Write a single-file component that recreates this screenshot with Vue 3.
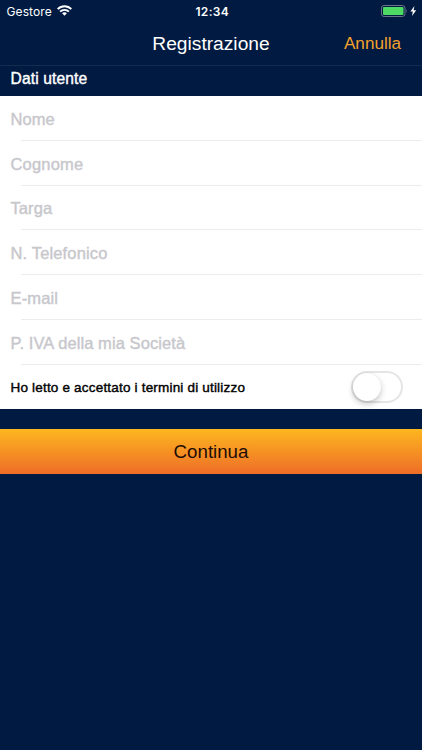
<script setup>
const fields = [
  { label: 'Nome', cls: 'nome' },
  { label: 'Cognome', cls: 'cognome' },
  { label: 'Targa', cls: 'targa' },
  { label: 'N. Telefonico', cls: 'telefono' },
  { label: 'E-mail', cls: 'email' },
  { label: 'P. IVA della mia Società', cls: 'iva' },
]
</script>

<template>
  <main class="screen">
    <header class="status">
      <div class="carrier">
        <span>Gestore</span>
        <svg class="wifi" width="15" height="11" viewBox="0 0 15 11" fill="none" stroke="#fff" stroke-width="1.9">
          <path d="M.7 4.2C4.5 .3 10.5 .3 14.3 4.2" />
          <path d="M3.1 6.7C5.5 4.3 9.5 4.3 11.9 6.7" />
          <path d="M7.5 10.7L5.1 8.3C6.4 7 8.6 7 9.9 8.3Z" fill="#fff" stroke="none" />
        </svg>
      </div>
      <span class="clock">12:34</span>
      <div class="power">
        <svg width="36" height="12" viewBox="0 0 36 12">
          <rect x=".5" y=".5" width="23.5" height="11" rx="2.6" fill="none" stroke="#69758d" />
          <rect x="2" y="2" width="20.5" height="8" rx="1" fill="#4cd964" />
          <path d="M25.3 4.1Q26.8 6 25.3 7.9Z" fill="#69758d" />
          <path d="M33.4 1L29.4 6.6H31.8L31 11L35.2 5.2H32.6Z" fill="#fff" />
        </svg>
      </div>
    </header>
    <nav class="nav">
      <span></span>
      <h1>Registrazione</h1>
      <a class="cancel">Annulla</a>
    </nav>
    <h2 class="section"><span>Dati utente</span></h2>
    <section class="form">
      <div v-for="f in fields" :key="f.cls" class="row">
        <span :class="['placeholder', f.cls]">{{ f.label }}</span>
      </div>
      <div class="row terms">
        <span class="terms-text">Ho letto e accettato i termini di utilizzo</span>
        <div class="switch"><div class="knob"></div></div>
      </div>
    </section>
    <button class="continue"><span>Continua</span></button>
  </main>
</template>

<style>
body { margin: 0; background: #001a41; }
</style>

<style scoped>
.screen {
  width: 422px;
  height: 750px;
  overflow: hidden;
  background: #001a41;
  color: #fff;
  font-family: "Liberation Sans", Arial, sans-serif;
}
.status {
  display: grid;
  grid-template-columns: 1fr auto 1fr;
  align-items: center;
  height: 22px;
  box-sizing: border-box;
  padding: 0 4px 0 6.5px;
  font-family: Inter, sans-serif;
  font-size: 12px;
}
.carrier { display: flex; align-items: center; gap: 5px; letter-spacing: .1px; }
.wifi { display: block; position: relative; top: -1px; }
.clock { font-weight: 600; font-size: 12px; letter-spacing: .3px; }
.power { display: flex; justify-content: flex-end; }
.power svg { display: block; margin-right: 1px; }
.nav {
  display: grid;
  grid-template-columns: 1fr auto 1fr;
  align-items: center;
  height: 43px;
  padding: 0 21px;
  border-bottom: 1px solid #142b50;
}
h1 { margin: 0; font-size: 19.2px; font-weight: 400; line-height: 22px; }
.cancel { justify-self: end; color: #f5a12c; font-size: 17.1px; line-height: 22px; }
.section {
  margin: 0;
  height: 30px;
  padding-left: 10.5px;
  box-sizing: border-box;
  font-size: 15.6px;
  letter-spacing: .13px;
  line-height: 26px;
  font-weight: 400;
  -webkit-text-stroke: .4px currentColor;
}
.form { background: #fff; }
.row {
  height: 44.75px;
  box-sizing: border-box;
  display: flex;
  align-items: center;
  padding: 1px 19px 0 10.5px;
  background: linear-gradient(#ececee, #ececee) 21px 100% / 100% 1px no-repeat;
}
.placeholder {
  color: #c7c7cc;
  font-size: 16.5px;
  letter-spacing: .08px;
  line-height: 20px;
  white-space: nowrap;
  -webkit-text-stroke: .4px currentColor;
}
.cognome { letter-spacing: .2px; }
.telefono { letter-spacing: .15px; }
.email { letter-spacing: .15px; }
.terms { background: none; justify-content: space-between; }
.terms-text {
  color: #000;
  font-size: 13.5px;
  letter-spacing: .19px;
  white-space: nowrap;
  -webkit-text-stroke: .4px currentColor;
}
.switch {
  width: 52px;
  height: 32px;
  box-sizing: border-box;
  border: 2px solid #e5e5e7;
  border-radius: 16px;
}
.knob {
  width: 28px;
  height: 28px;
  border-radius: 50%;
  background: #fff;
  box-shadow: 0 3px 6px rgba(0, 0, 0, .22), 0 0 1px rgba(0, 0, 0, .12);
}
.continue {
  display: flex;
  align-items: center;
  justify-content: center;
  width: 100%;
  height: 45px;
  margin: 19.75px 0 0;
  padding: 0;
  border: 0;
  background: linear-gradient(#fdb71f, #ee6d28);
  color: #1d0d05;
  font: 18.7px "Liberation Sans", Arial, sans-serif;
}
</style>
